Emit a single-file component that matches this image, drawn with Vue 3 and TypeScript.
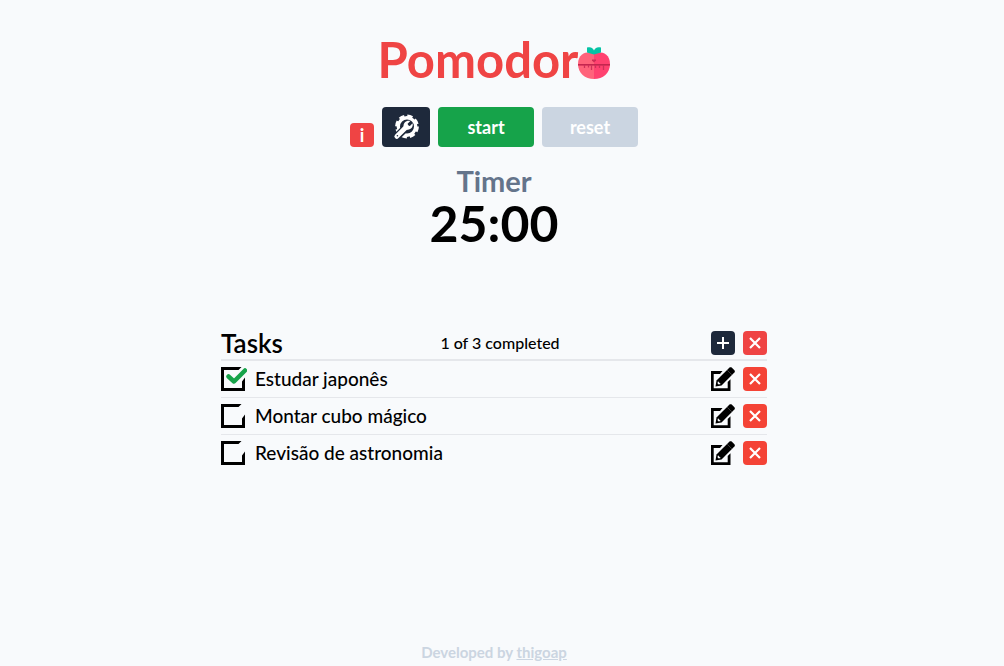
<script setup lang="ts">
import { computed, ref } from 'vue'

interface Task {
  id: number
  name: string
  done: boolean
}

const tasks = ref<Task[]>([
  { id: 1, name: 'Estudar japonês', done: true },
  { id: 2, name: 'Montar cubo mágico', done: false },
  { id: 3, name: 'Revisão de astronomia', done: false },
])

const completed = computed(() => tasks.value.filter((t) => t.done).length)

function removeTask(id: number) {
  tasks.value = tasks.value.filter((t) => t.id !== id)
}
</script>

<template>
  <div class="page">
    <header class="brand">
      <h1>Pomodor</h1>
      <svg class="tomato" viewBox="0 0 32 32" aria-hidden="true">
        <path d="M16 6C21 4 32 5 32 17c0 9-7 15-16 15z" fill="#ff4270" />
        <path d="M16 6C11 4 0 5 0 17c0 9 7 15 16 15z" fill="#ff637b" />
        <path d="M16 7.500 9 5.500V.500c4-1 6 .5 7 3 1-2.500 3-4 7-3v5z" fill="#05c3a5" />
        <path d="M0 17h32v1.600H0z" fill="#c4264f" />
        <path d="M6.500 18v3M10.500 18v2.500M13.500 18v5M17.500 18v3M21.500 18v3M25.500 18v5" stroke="#d0305a" stroke-width="1.300" />
        <path d="M14 12.500h4v1l-2 2-2-2z" fill="#cf2b55" />
      </svg>
    </header>

    <div class="controls">
      <button type="button" class="square danger info" aria-label="Information">i</button>
      <button type="button" class="control settings" aria-label="Settings">
        <svg viewBox="0 0 26 26" aria-hidden="true">
          <circle cx="14" cy="12.500" r="10.600" fill="none" stroke="#fff" stroke-width="2.600" stroke-dasharray="5.300 3.025" />
          <circle cx="14" cy="12.500" r="8.700" fill="none" stroke="#fff" stroke-width="3.400" />
          <path d="M3 23.500 13 13.500" stroke="#1e293b" stroke-width="7.600" />
          <path d="M3.800 22.400 13.500 12.700" stroke="#fff" stroke-width="4.800" stroke-linecap="round" />
          <path d="M17.300 7 14.600 9.700l.4 1.900 1.900.4 2.700-2.700c1 3.800-2.200 7.200-6.200 6.200l-2.700-2.600c-.9-4 2.800-6.900 6.600-5.900z" fill="#fff" />
          <circle cx="4.400" cy="21.800" r=".8" fill="#1e293b" />
        </svg>
      </button>
      <button type="button" class="control start">start</button>
      <button type="button" class="control reset" disabled>reset</button>
    </div>

    <section class="timer">
      <h2>Timer</h2>
      <p>25:00</p>
    </section>

    <main class="tasks">
      <div class="tasks-head">
        <h2>Tasks</h2>
        <span class="count">{{ completed }} of {{ tasks.length }} completed</span>
        <div class="actions">
          <button type="button" class="square dark" aria-label="Add task">
            <svg viewBox="0 0 24 24" aria-hidden="true">
              <path d="M12 6v12M6 12h12" stroke="#fff" stroke-width="2" />
            </svg>
          </button>
          <button type="button" class="square danger" aria-label="Remove all tasks" @click="tasks = []">
            <svg viewBox="0 0 24 24" aria-hidden="true">
              <path d="m7 7 10 10M17 7 7 17" stroke="#fff" stroke-width="2.200" />
            </svg>
          </button>
        </div>
      </div>
      <ul>
        <li v-for="task in tasks" :key="task.id">
          <label>
            <span class="check">
              <input v-model="task.done" type="checkbox" />
              <svg viewBox="0 0 26 24" aria-hidden="true">
                <path d="M20.500 0 17.500 3H3v18h18v-6.500l3-4V24H0V0z" fill="#000" />
                <path v-if="task.done" d="m7.500 9.500 5.500 5L24 3.500" fill="none" stroke="#16a34a" stroke-width="4.500" stroke-linecap="round" stroke-linejoin="round" />
              </svg>
            </span>
            <span>{{ task.name }}</span>
          </label>
          <div class="actions">
            <button type="button" class="square" :aria-label="`Edit ${task.name}`">
              <svg viewBox="0 0 24 24" aria-hidden="true">
                <path d="M0 4h11.500L9 7H2.700v14.300h14V15l2.800-2.800V24H0z" fill="#000" />
                <path d="m5.500 13.500 11.300-11.300L18.500.6c.7-.6 1.500-.6 2.200 0l2.700 2.700c.6.700.6 1.500 0 2.200L10.500 18.500l-6 1z" fill="#000" />
                <path d="m7 14.300 2.700 2.700-2 .5-1.200-1.200z" fill="#f8fafc" />
                <path d="m16.300 3.300 4.500 4.500" stroke="#777" stroke-width=".5" />
              </svg>
            </button>
            <button type="button" class="square remove" :aria-label="`Remove ${task.name}`" @click="removeTask(task.id)">
              <svg viewBox="0 0 24 24" aria-hidden="true">
                <path d="m7 7 10 10M17 7 7 17" stroke="#fff" stroke-width="2.200" />
              </svg>
            </button>
          </div>
        </li>
      </ul>
    </main>

    <footer>Developed by <a href="#">thigoap</a></footer>
  </div>
</template>

<style>
body {
  margin: 0;
  background: #f8fafc;
}
</style>

<style scoped>
.page {
  box-sizing: border-box;
  display: flex;
  flex-direction: column;
  align-items: center;
  min-height: 100vh;
  padding: 35px 16px 4px 0;
  background: #f8fafc;
  color: #000;
  font-family: Lato, "Liberation Sans", sans-serif;
  font-size: 16px;
  line-height: 24px;
}

h1,
h2,
p,
ul {
  margin: 0;
  padding: 0;
}

button {
  border: 0;
  padding: 0;
  background: none;
  color: #fff;
  font: inherit;
  font-weight: 700;
  cursor: pointer;
}

svg {
  display: block;
}

.brand {
  display: flex;
  align-items: center;
}

h1 {
  color: #ef4444;
  font-size: 49px;
  font-weight: 700;
  line-height: 48px;
}

.tomato {
  width: 32px;
  height: 32px;
  margin-top: 8px;
}

.controls {
  display: flex;
  align-items: flex-end;
  gap: 8px;
  margin: 24px 0 16px;
}

.control {
  display: flex;
  align-items: center;
  justify-content: center;
  width: 96px;
  height: 40px;
  border-radius: 4px;
  font-size: 18px;
}

.settings {
  width: 48px;
  background: #1e293b;
}

.settings svg {
  width: 26px;
  height: 26px;
}

.start {
  background: #16a34a;
}

.reset {
  background: #cbd5e1;
}

.square {
  width: 24px;
  height: 24px;
  border-radius: 4px;
}

.square svg {
  width: 24px;
  height: 24px;
}

.danger {
  background: #ef4444;
}

.info {
  font-size: 18px;
}

.remove {
  background: #f44336;
}

.dark {
  background: #1e293b;
}

.timer {
  text-align: center;
}

.timer h2 {
  color: #64748b;
  font-size: 29px;
  font-weight: 700;
  line-height: 36px;
}

.timer p {
  font-size: 50px;
  font-weight: 700;
  line-height: 48px;
}

.tasks {
  width: 100%;
  max-width: 546px;
  margin: 84px 0 24px;
}

.tasks-head {
  display: grid;
  grid-template-columns: 1fr auto 1fr;
  align-items: center;
  padding-bottom: 4px;
  border-bottom: 2px solid #e5e7eb;
}

.tasks-head h2 {
  font-size: 26px;
  font-weight: 600;
  line-height: 24px;
}

.count {
  padding-left: 12px;
  font-weight: 500;
}

.actions {
  display: flex;
  justify-content: flex-end;
  gap: 8px;
}

ul {
  list-style: none;
}

li {
  display: flex;
  align-items: center;
  justify-content: space-between;
  padding: 6px 0;
}

li + li {
  border-top: 1px solid #e5e7eb;
}

label {
  display: flex;
  align-items: center;
  gap: 8px;
  font-size: 19px;
  font-weight: 500;
  cursor: pointer;
}

.check {
  position: relative;
}

.check svg {
  width: 26px;
  height: 24px;
}

.check input {
  position: absolute;
  inset: 0;
  width: 100%;
  height: 100%;
  margin: 0;
  opacity: 0;
  cursor: pointer;
}

footer {
  margin-top: auto;
  color: #cbd5e1;
  font-size: 15px;
  font-weight: 700;
  line-height: 20px;
}

footer a {
  color: inherit;
}
</style>
